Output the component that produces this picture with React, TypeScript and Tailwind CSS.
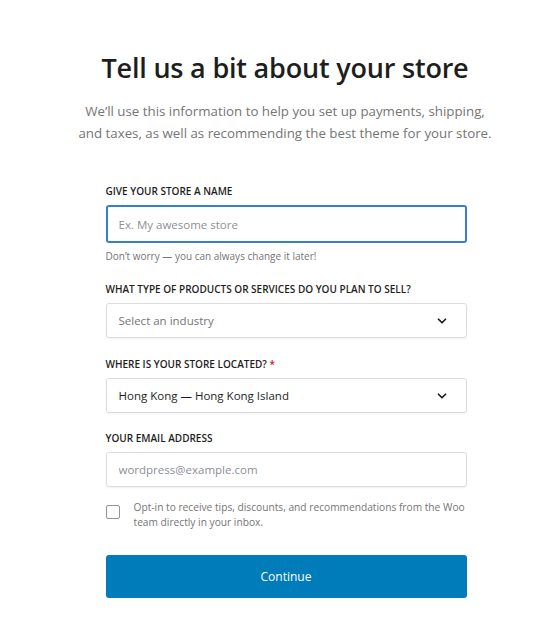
import { ChevronDown } from "lucide-react";

function Label({ children }: { children: React.ReactNode }) {
    return <label className="block text-[10px] font-semibold uppercase text-[#1e1e1e] mb-[7px] leading-[14px]">{children}</label>
}

function SelectBox({ value, placeholder }: { value: string, placeholder?: boolean }) {
    return (
        <div className="flex items-center justify-between h-[35px] border border-[#dcdcde] rounded-[3px] pl-[12px] pr-[17px] shadow-[0_1px_2px_rgba(0,0,0,0.06)]">
            <span className={placeholder ? "text-[11.5px] text-[#757575]" : "text-[11.5px] text-[#1e1e1e]"}>{value}</span>
            <ChevronDown size={14} strokeWidth={3} className="text-[#1e1e1e]" />
        </div>
    )
}

export default function App() {
    return (
        <section className="w-[560px] h-[636px] bg-white pt-[44px] flex flex-col items-center" style={{ fontFamily: '"Open Sans", "Noto Sans", sans-serif' }}>
            <h1 className="ml-[10px] text-[27px] font-semibold text-[#1e1e1e] leading-[48px] tracking-[-0.2px]">Tell us a bit about your store</h1>
            <p className="ml-[10px] mt-[8px] text-[13.3px] leading-[22px] text-[#757575] text-center w-[416px]">
                We’ll use this information to help you set up payments, shipping, and taxes, as well as recommending the best theme for your store.
            </p>

            <form className="w-[361px] mt-[40px] ml-[12px]">
                <Label>Give your store a name</Label>
                <input
                    placeholder="Ex. My awesome store"
                    className="w-full h-[38px] border-2 border-[#3582c4] rounded-[3px] px-[11px] text-[11.5px] placeholder:text-[#8c8f94] outline-none"
                />
                <p className="mt-[6px] text-[10px] text-[#757575] leading-[14px]">Don’t worry — you can always change it later!</p>

                <div className="mt-[19px]">
                    <Label>What type of products or services do you plan to sell?</Label>
                    <SelectBox value="Select an industry" placeholder />
                </div>

                <div className="mt-[19px]">
                    <Label>Where is your store located? <span className="text-[#cc1818]">*</span></Label>
                    <SelectBox value="Hong Kong — Hong Kong Island" />
                </div>

                <div className="mt-[18px]">
                    <Label>Your email address</Label>
                    <input
                        placeholder="wordpress@example.com"
                        className="w-full h-[35px] border border-[#dcdcde] rounded-[3px] px-[12px] text-[11.5px] placeholder:text-[#8c8f94] outline-none shadow-[0_1px_2px_rgba(0,0,0,0.06)]"
                    />
                </div>

                <div className="flex items-start mt-[13px]">
                    <div className="w-[14px] h-[14px] border border-[#949494] rounded-[2px] mt-[5px] shrink-0" />
                    <p className="ml-[14px] text-[10.2px] leading-[15px] text-[#757575]">
                        Opt-in to receive tips, discounts, and recommendations from the Woo team directly in your inbox.
                    </p>
                </div>

                <button type="button" className="mt-[25px] w-full h-[43px] bg-[#007cba] rounded-[3px] text-white text-[12px]">
                    Continue
                </button>
            </form>
        </section>
    )
}
